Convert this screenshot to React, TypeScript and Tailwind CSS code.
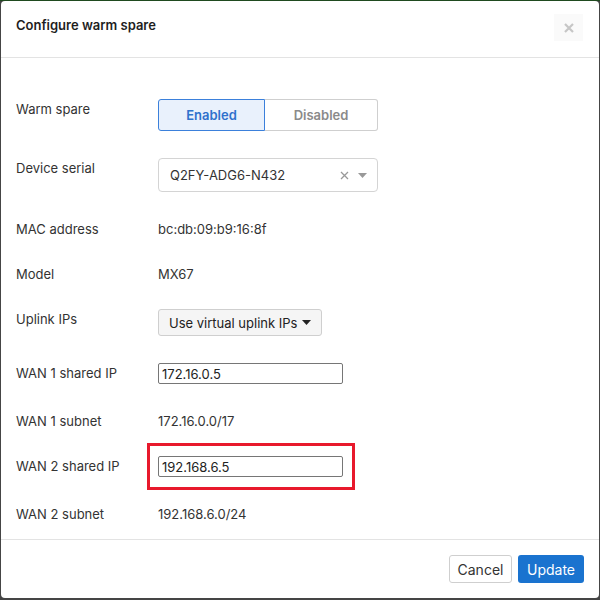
type Row = {
  label: string;
  content: React.ReactNode;
};

function Caret() {
  return (
    <svg width="9" height="5" viewBox="0 0 9 5" className="shrink-0">
      <path d="M0 0 L9 0 L4.5 5 Z" fill="currentColor" />
    </svg>
  );
}

function Toggle() {
  return (
    <div className="flex h-[32px] w-[220px] text-[13px] font-semibold">
      <button className="w-[107px] rounded-l-[3px] border border-[#3b80db] bg-[#e9f1fc] text-[#2f72cc]">
        Enabled
      </button>
      <button className="flex-1 rounded-r-[3px] border border-l-0 border-[#cfcfcf] bg-white text-[#8a8a8a]">
        Disabled
      </button>
    </div>
  );
}

function SerialSelect() {
  return (
    <div className="flex h-[34px] w-[220px] items-center rounded-[4px] border border-[#d4d4d4] bg-white pl-[11px] pr-[10px] text-[13px] text-[#333]">
      <span className="flex-1">Q2FY-ADG6-N432</span>
      <svg width="9" height="9" viewBox="0 0 9 9" className="mr-[9px] text-[#999]">
        <path d="M1 1 L8 8 M8 1 L1 8" stroke="currentColor" strokeWidth="1.3" />
      </svg>
      <span className="text-[#999]">
        <Caret />
      </span>
    </div>
  );
}

function TextInput({ value }: { value: string }) {
  return (
    <input
      defaultValue={value}
      className="block h-[21px] w-[185px] rounded-[2px] border border-[#767676] px-[3px] text-[13px] text-[#222] outline-none"
    />
  );
}

export default function App() {
  const rows: Row[] = [
    { label: "Warm spare", content: <Toggle /> },
    { label: "Device serial", content: <SerialSelect /> },
    { label: "MAC address", content: <span className="block translate-y-[1px]">bc:db:09:b9:16:8f</span> },
    { label: "Model", content: <span className="block translate-y-[1px]">MX67</span> },
    {
      label: "Uplink IPs",
      content: (
        <button className="flex h-[27px] items-center gap-[5px] rounded-[3px] border border-[#cfcfcf] bg-[#f5f5f5] px-[10px] text-[13px] text-[#222]">
          Use virtual uplink IPs
          <Caret />
        </button>
      ),
    },
    { label: "WAN 1 shared IP", content: <TextInput value="172.16.0.5" /> },
    { label: "WAN 1 subnet", content: <span className="block translate-y-[1px]">172.16.0.0/17</span> },
    {
      label: "WAN 2 shared IP",
      content: (
        <div className="relative">
          <TextInput value="192.168.6.5" />
          {/* highlight annotation */}
          <div className="pointer-events-none absolute left-[-11px] top-[-13px] h-[47px] w-[208px] border-[3px] border-[#e8192c]" />
        </div>
      ),
    },
    { label: "WAN 2 subnet", content: <span className="block translate-y-[1px]">192.168.6.0/24</span> },
  ];

  return (
    <div
      className="h-[600px] w-[600px] border-t border-[#1f4a1f] bg-[#454545] px-[1px] pb-[2px]"
      style={{ fontFamily: "Inter, 'Noto Sans', sans-serif" }}
    >
      <div className="flex h-full flex-col rounded-[4px] bg-white">
        {/* HEADER */}
        <div className="flex h-[57px] items-start justify-between border-b border-[#e3e3e3] pl-[15px] pr-[16px]">
          <h1 className="mt-[15px] text-[13px] font-semibold text-[#1e1e1e]">
            Configure warm spare
          </h1>
          <button className="mt-[13px] flex h-[27px] w-[29px] items-center justify-center bg-[#fafafa] text-[#c6c6c6]">
            <svg width="10" height="10" viewBox="0 0 10 10">
              <path d="M1 1 L9 9 M9 1 L1 9" stroke="currentColor" strokeWidth="2.2" />
            </svg>
          </button>
        </div>

        {/* BODY */}
        <div className="flex flex-1 flex-col gap-[27px] pl-[15px] pt-[41px] text-[13px] text-[#333]">
          {rows.map((r) => (
            <div key={r.label} className="flex items-start">
              <div className="w-[142px] translate-y-[1px] leading-[18px]">{r.label}</div>
              <div className="leading-[18px]">{r.content}</div>
            </div>
          ))}
        </div>

        {/* FOOTER */}
        <div className="flex h-[59px] items-start justify-end gap-[6px] border-t border-[#e3e3e3] pr-[15px] pt-[15px] text-[14px]">
          <button className="h-[28px] w-[63px] rounded-[3px] border border-[#cfcfcf] bg-white text-[#333]">
            Cancel
          </button>
          <button className="h-[28px] w-[66px] rounded-[3px] bg-[#1a73cf] text-white">
            Update
          </button>
        </div>
      </div>
    </div>
  );
}
